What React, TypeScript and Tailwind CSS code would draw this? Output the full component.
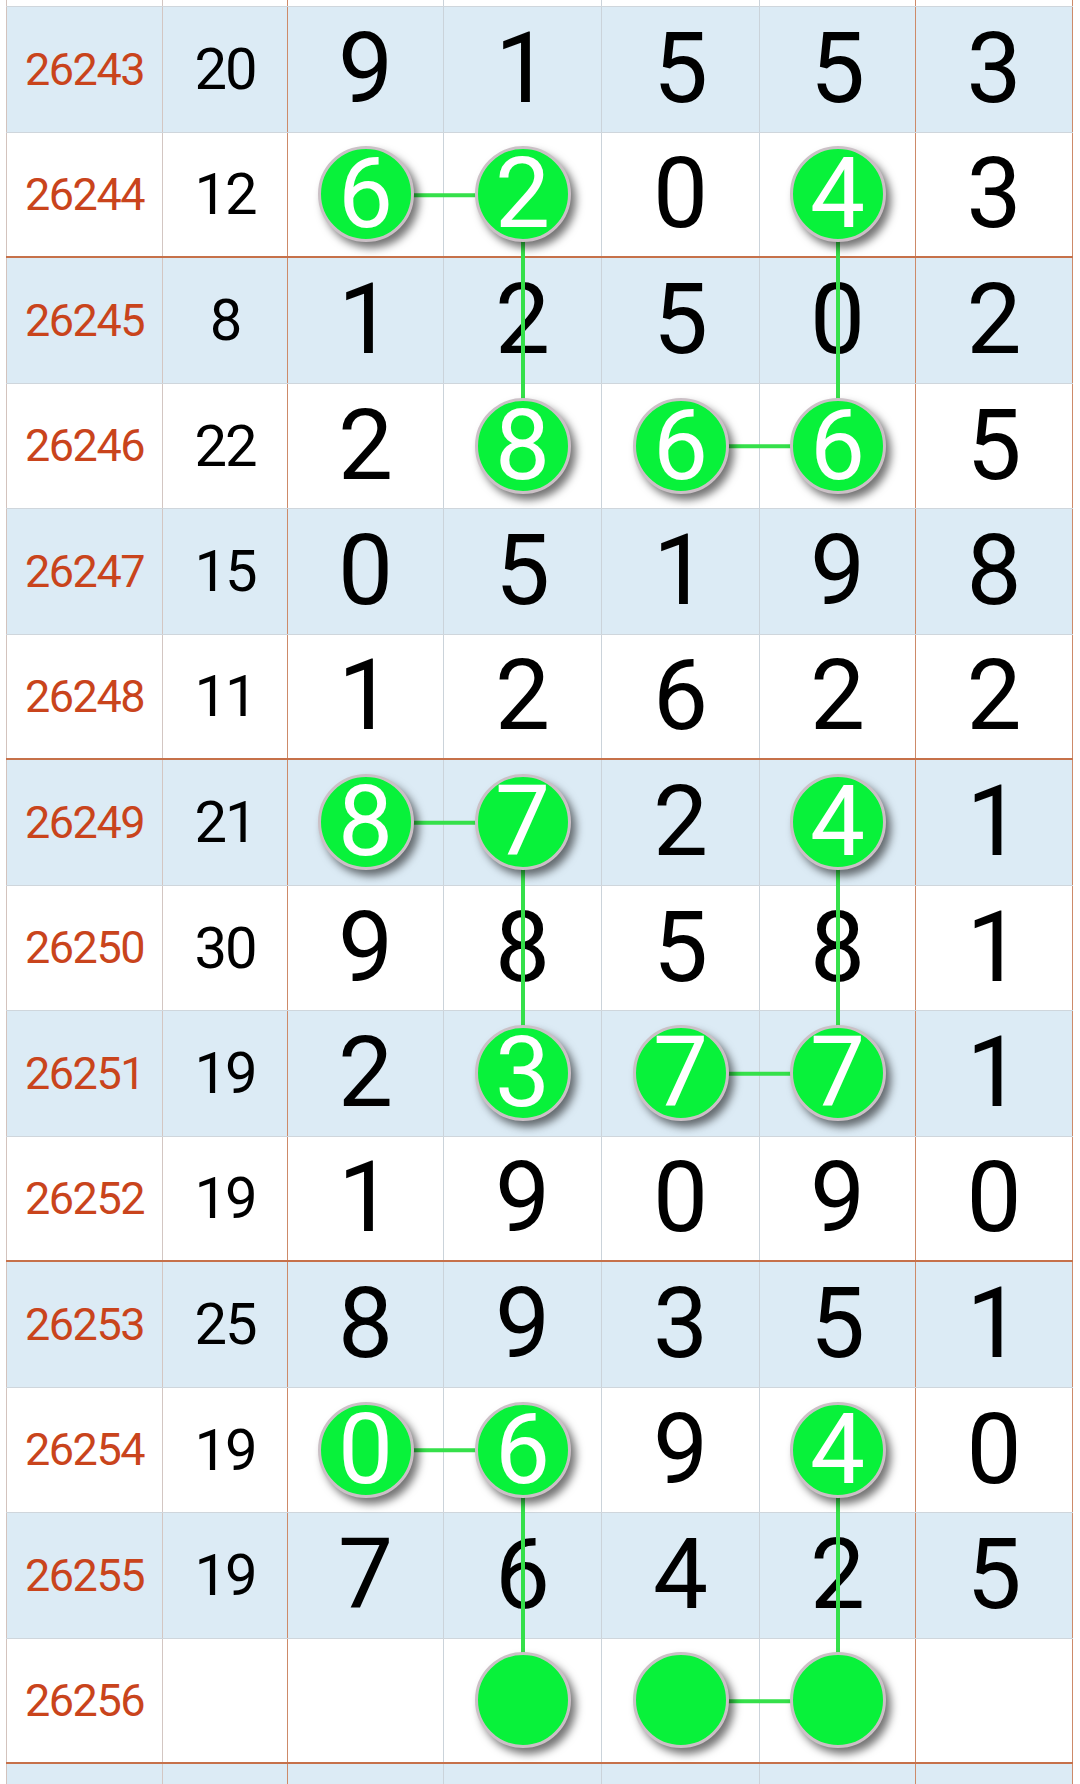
import React from 'react';

interface DrawRow {
  period: string;
  sum: string;
  digits: (number | null)[];
  // indexes of the digit columns that carry a green ball
  balls: number[];
}

const ROW_H = 125.5;
const TOP_H = 7;
const COL_W = [157, 125, 156, 158, 158, 156, 157];

const rows: DrawRow[] = [
  { period: '26243', sum: '20', digits: [9, 1, 5, 5, 3], balls: [] },
  { period: '26244', sum: '12', digits: [6, 2, 0, 4, 3], balls: [0, 1, 3] },
  { period: '26245', sum: '8', digits: [1, 2, 5, 0, 2], balls: [] },
  { period: '26246', sum: '22', digits: [2, 8, 6, 6, 5], balls: [1, 2, 3] },
  { period: '26247', sum: '15', digits: [0, 5, 1, 9, 8], balls: [] },
  { period: '26248', sum: '11', digits: [1, 2, 6, 2, 2], balls: [] },
  { period: '26249', sum: '21', digits: [8, 7, 2, 4, 1], balls: [0, 1, 3] },
  { period: '26250', sum: '30', digits: [9, 8, 5, 8, 1], balls: [] },
  { period: '26251', sum: '19', digits: [2, 3, 7, 7, 1], balls: [1, 2, 3] },
  { period: '26252', sum: '19', digits: [1, 9, 0, 9, 0], balls: [] },
  { period: '26253', sum: '25', digits: [8, 9, 3, 5, 1], balls: [] },
  { period: '26254', sum: '19', digits: [0, 6, 9, 4, 0], balls: [0, 1, 3] },
  { period: '26255', sum: '19', digits: [7, 6, 4, 2, 5], balls: [] },
  { period: '26256', sum: '', digits: [null, null, null, null, null], balls: [1, 2, 3] },
];

// [row, col] pairs, col is the digit index
const links: [number, number, number, number][] = [
  [1, 0, 1, 1],
  [1, 1, 3, 1],
  [1, 3, 3, 3],
  [3, 2, 3, 3],
  [6, 0, 6, 1],
  [6, 1, 8, 1],
  [6, 3, 8, 3],
  [8, 2, 8, 3],
  [11, 0, 11, 1],
  [11, 1, 13, 1],
  [11, 3, 13, 3],
  [13, 2, 13, 3],
];

const colCenter = (digitIdx: number) => {
  const col = digitIdx + 2;
  let x = 0;
  for (let i = 0; i < col; i++) x += COL_W[i];
  return x + COL_W[col] / 2;
};

const rowCenter = (r: number) => TOP_H + r * ROW_H + ROW_H / 2;

function Ball({ value }: { value: number | null }) {
  return (
    <div className="relative z-20 flex h-[96px] w-[96px] items-center justify-center rounded-full border-[3px] border-[#cbc0c6] bg-[#08f23a] shadow-[5px_6px_8px_rgba(0,0,0,0.55)]">
      <span className="text-[98px] leading-none text-white">{value}</span>
    </div>
  );
}

function EmptyRow({ blue, height }: { blue: boolean; height: string }) {
  return (
    <div className={`grid grid-cols-[157px_125px_156px_158px_158px_156px_157px] ${height} ${blue ? 'bg-[#dcebf5]' : 'bg-white'}`}>
      <div className="border-l border-r border-l-[#d3c3bd] border-r-[#d3c6c2]" />
      <div className="border-r border-r-[#cd8a69]" />
      <div className="border-r border-r-[#cbd3da]" />
      <div className="border-r border-r-[#cbd3da]" />
      <div className="border-r border-r-[#cbd3da]" />
      <div className="border-r border-r-[#cd8a69]" />
      <div className="border-r border-r-[#cd8a69]" />
    </div>
  );
}

export default function App() {
  const width = COL_W.reduce((a, b) => a + b, 0);
  const height = TOP_H + rows.length * ROW_H + 40;

  return (
    <div className="h-[1784px] w-[1080px] overflow-hidden bg-white font-['Roboto',sans-serif] pl-[6px]">
      <div className="relative w-[1067px]">
        {/* top sliver of the previous row */}
        <div className="border-b border-b-[#cfd6dc]">
          <EmptyRow blue={false} height="h-[6px]" />
        </div>

        {rows.map((row, r) => {
          const blue = r % 2 === 0;
          const groupEnd = Number(row.period) % 4 === 0;
          return (
            <div
              key={row.period}
              className={`grid h-[125.5px] grid-cols-[157px_125px_156px_158px_158px_156px_157px] ${blue ? 'bg-[#dcebf5]' : 'bg-white'} ${groupEnd ? 'border-b-2 border-b-[#c6714a]' : 'border-b border-b-[#cfd6dc]'}`}
            >
              <div className="flex items-center justify-center border-l border-r border-l-[#d3c3bd] border-r-[#d3c6c2]">
                <span className="text-[45px] leading-none tracking-[-1.5px] text-[#c9441c]">{row.period}</span>
              </div>
              <div className="flex items-center justify-center border-r border-r-[#cd8a69]">
                <span className="text-[58px] leading-none tracking-[-2px] text-black">{row.sum}</span>
              </div>
              {row.digits.map((d, i) => (
                <div
                  key={i}
                  className={`flex items-center justify-center border-r ${i === 3 || i === 4 ? 'border-r-[#cd8a69]' : 'border-r-[#cbd3da]'}`}
                >
                  {row.balls.includes(i) ? (
                    <Ball value={d} />
                  ) : (
                    <span className="text-[98px] leading-none text-black">{d}</span>
                  )}
                </div>
              ))}
            </div>
          );
        })}

        {/* next row peeking in at the bottom */}
        <EmptyRow blue={true} height="h-[40px]" />

        <svg
          className="pointer-events-none absolute left-0 top-0 z-10"
          width={width}
          height={height}
          viewBox={`0 0 ${width} ${height}`}
        >
          {links.map(([r1, c1, r2, c2], k) => (
            <line
              key={k}
              x1={colCenter(c1)}
              y1={rowCenter(r1)}
              x2={colCenter(c2)}
              y2={rowCenter(r2)}
              stroke="#35e04a"
              strokeWidth={4}
            />
          ))}
        </svg>
      </div>
    </div>
  );
}
